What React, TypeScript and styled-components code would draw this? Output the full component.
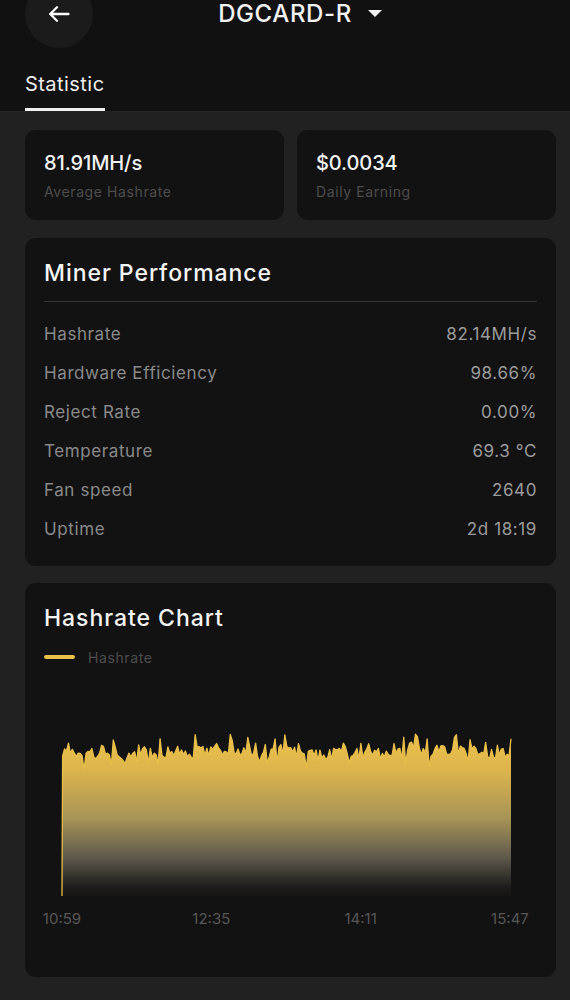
import React from "react";
import styled, { createGlobalStyle } from "styled-components";

const Global = createGlobalStyle`
  html, body { margin: 0; padding: 0; background: #212121; }
  body { font-family: Inter, "Noto Sans", Roboto, sans-serif; color: #eee; -webkit-font-smoothing: antialiased; }
  * { box-sizing: border-box; }
`;

const Page = styled.div`
  width: 570px;
  min-height: 1000px;
  background: #212121;
  overflow: hidden;
`;

const Header = styled.header`
  background: #111111;
  border-bottom: 1px solid #262626;
`;

const TopBar = styled.div`
  display: grid;
  grid-template-columns: 1fr auto 1fr;
  align-items: center;
  margin-top: -20px;
  padding: 0 25px;
`;

const BackButton = styled.button`
  width: 68px;
  height: 68px;
  border-radius: 50%;
  border: none;
  background: #1b1b1b;
  display: flex;
  align-items: center;
  justify-content: center;
  padding: 0;
  justify-self: start;
`;

const Title = styled.h1`
  margin: 0;
  font-size: 24px;
  line-height: 28px;
  font-weight: 500;
  letter-spacing: 0.6px;
  color: #f2f2f2;
`;

const Caret = styled.div`
  justify-self: start;
  margin-left: 16px;
  margin-top: -2px;
  width: 0;
  height: 0;
  border-left: 7px solid transparent;
  border-right: 7px solid transparent;
  border-top: 7px solid #f2f2f2;
`;

const Tabs = styled.nav`
  display: flex;
  padding: 24px 25px 0;
`;

const Tab = styled.div<{ $active?: boolean }>`
  font-size: 20px;
  line-height: 24px;
  letter-spacing: 0.45px;
  color: #eeeeee;
  padding-bottom: 12px;
  border-bottom: 3px solid ${(p) => (p.$active ? "#f0f0f0" : "transparent")};
`;

const Main = styled.main`
  display: flex;
  flex-direction: column;
  gap: 17px;
  padding: 18px 14px 20px 25px;
`;

const StatRow = styled.div`
  display: grid;
  grid-template-columns: 1fr 1fr;
  gap: 13px;
  margin-bottom: 1px;
`;

const Card = styled.section`
  background: #121212;
  border-radius: 11px;
  padding: 21px 19px 18px;
`;

const StatCard = styled(Card)`
  height: 90px;
  padding: 21px 19px 19px;
`;

const StatValue = styled.div`
  font-size: 20px;
  line-height: 24px;
  font-weight: 500;
  letter-spacing: -0.1px;
  color: #f2f2f2;
`;

const StatLabel = styled.div`
  margin-top: 8px;
  font-size: 14px;
  line-height: 18px;
  color: #4d4d4d;
  letter-spacing: 0.6px;
`;

const CardTitle = styled.h2`
  margin: 0;
  font-size: 23px;
  line-height: 28px;
  font-weight: 500;
  color: #f4f4f4;
  letter-spacing: 0.95px;
`;

const Divider = styled.div`
  height: 1px;
  margin-top: 14px;
  background: #333333;
`;

const Rows = styled.div`
  margin-top: 12px;
  display: flex;
  flex-direction: column;
`;

const Row = styled.div`
  height: 39px;
  display: flex;
  align-items: center;
  justify-content: space-between;
  font-size: 17px;
  letter-spacing: 0.6px;
`;

const RowLabel = styled.span`
  color: #8a8a8a;
`;

const RowValue = styled.span`
  color: #9c9c9c;
`;

const ChartCard = styled(Card)`
  padding-bottom: 49px;
`;

const Legend = styled.div`
  margin-top: 16px;
  display: flex;
  align-items: center;
  gap: 13px;
  height: 18px;
`;

const LegendLine = styled.span`
  width: 31px;
  height: 4px;
  border-radius: 2px;
  background: #e8c04c;
`;

const LegendText = styled.span`
  font-size: 14px;
  letter-spacing: 0.6px;
  color: #4d4d4d;
`;

const ChartSvg = styled.svg`
  display: block;
`;

const AxisRow = styled.div`
  display: flex;
  justify-content: space-between;
  margin: 4px 7px 0 -2px;
  font-size: 15px;
  line-height: 18px;
  color: #575757;
`;

const AxisLabel = styled.span`
  width: 40px;
  text-align: center;
`;

function buildChart() {
  let seed = 424242;
  const rand = () => {
    seed = (seed * 1103515245 + 12345) % 2147483648;
    return seed / 2147483648;
  };
  const x0 = 18;
  const x1 = 467;
  const base = 230;
  const n = 230;
  const pts: [number, number][] = [[x0, base]];
  for (let i = 0; i <= n; i++) {
    const x = x0 + 0.6 + (i / n) * (x1 - x0 - 0.6);
    const slow = Math.sin(i * 0.21) * 2 + Math.sin(i * 0.057) * 2;
    let y = 86 + slow + (rand() - 0.5) * 12;
    const r = rand();
    if (r > 0.84) y -= 6 + rand() * 7;
    else if (r < 0.12) y += 5 + rand() * 6;
    pts.push([x, y]);
  }
  const line = pts.map((p, i) => `${i === 0 ? "M" : "L"}${p[0].toFixed(2)} ${p[1].toFixed(2)}`).join(" ");
  const area = `${line} L${x1} ${base} Z`;
  return { line, area };
}

const chart = buildChart();

const rows: [string, string][] = [
  ["Hashrate", "82.14MH/s"],
  ["Hardware Efficiency", "98.66%"],
  ["Reject Rate", "0.00%"],
  ["Temperature", "69.3 °C"],
  ["Fan speed", "2640"],
  ["Uptime", "2d 18:19"],
];

export default function App() {
  return (
    <Page>
      <Global />
      <Header>
        <TopBar>
          <BackButton aria-label="back">
            <svg width="22" height="16" viewBox="0 0 22 16" fill="none">
              <path d="M20.5 8H2.2M9 1.3L2.2 8L9 14.7" stroke="#fff" strokeWidth="2.3" strokeLinecap="round" strokeLinejoin="round" />
            </svg>
          </BackButton>
          <Title>DGCARD-R</Title>
          <Caret />
        </TopBar>
        <Tabs>
          <Tab $active>Statistic</Tab>
        </Tabs>
      </Header>
      <Main>
        <StatRow>
          <StatCard>
            <StatValue>81.91MH/s</StatValue>
            <StatLabel>Average Hashrate</StatLabel>
          </StatCard>
          <StatCard>
            <StatValue>$0.0034</StatValue>
            <StatLabel>Daily Earning</StatLabel>
          </StatCard>
        </StatRow>
        <Card>
          <CardTitle>Miner Performance</CardTitle>
          <Divider />
          <Rows>
            {rows.map(([l, v]) => (
              <Row key={l}>
                <RowLabel>{l}</RowLabel>
                <RowValue>{v}</RowValue>
              </Row>
            ))}
          </Rows>
        </Card>
        <ChartCard>
          <CardTitle>Hashrate Chart</CardTitle>
          <Legend>
            <LegendLine />
            <LegendText>Hashrate</LegendText>
          </Legend>
          <ChartSvg width="493" height="240" viewBox="0 0 493 240">
            <defs>
              <linearGradient id="hrFill" x1="0" y1="72" x2="0" y2="232" gradientUnits="userSpaceOnUse">
                <stop offset="0" stopColor="#ebc04c" />
                <stop offset="0.2" stopColor="#dcb44c" />
                <stop offset="0.5" stopColor="#a89456" />
                <stop offset="0.75" stopColor="#5e584c" />
                <stop offset="0.93" stopColor="#1e1d1b" />
                <stop offset="1" stopColor="#131313" />
              </linearGradient>
            </defs>
            <path d={chart.area} fill="url(#hrFill)" />
            <path d={chart.line} fill="none" stroke="#e8be4a" strokeWidth="1.3" strokeLinejoin="round" />
          </ChartSvg>
          <AxisRow>
            <AxisLabel>10:59</AxisLabel>
            <AxisLabel>12:35</AxisLabel>
            <AxisLabel>14:11</AxisLabel>
            <AxisLabel>15:47</AxisLabel>
          </AxisRow>
        </ChartCard>
      </Main>
    </Page>
  );
}
